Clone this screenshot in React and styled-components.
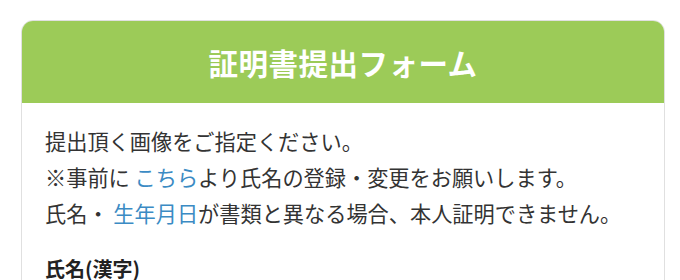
import React from 'react';
import styled, { createGlobalStyle } from 'styled-components';

const GlobalStyle = createGlobalStyle`
  body {
    margin: 0;
    background: #fff;
    font-family: "Noto Sans CJK JP", "Noto Sans", sans-serif;
    color: #333;
  }
`;

const Page = styled.div`
  padding: 20px 15px 0 21px;
`;

const Card = styled.section`
  width: 644px;
  box-sizing: border-box;
  border: 1px solid #e0e0e0;
  border-radius: 12px;
  overflow: hidden;
  background: #fff;
`;

const Header = styled.h1`
  margin: 0;
  height: 82px;
  display: flex;
  align-items: center;
  justify-content: center;
  background-color: #9ccb58;
  color: #fff;
  font-size: 29.5px;
  font-weight: bold;
  letter-spacing: 0.5px;
`;

const Body = styled.div`
  padding: 20px 23px 20px;
`;

const Lead = styled.p`
  margin: 0;
  font-size: 21.2px;
  line-height: 36px;
  color: #333;
`;

const Link = styled.a`
  color: #3b8bc4;
  text-decoration: none;
`;

const Label = styled.h3`
  margin: 20px 0 0;
  font-size: 20px;
  line-height: 36px;
  font-weight: bold;
  color: #222;
`;

const App = () => {
  return (
    <Page>
      <GlobalStyle />
      <Card>
        <Header>証明書提出フォーム</Header>
        <Body>
          <Lead>
            提出頂く画像をご指定ください。
            <br />
            ※事前に <Link href="#">こちら</Link>より氏名の登録・変更をお願いします。
            <br />
            氏名・ <Link href="#">生年月日</Link>が書類と異なる場合、本人証明できません。
          </Lead>
          <Label>氏名(漢字)</Label>
        </Body>
      </Card>
    </Page>
  );
};

export default App;
